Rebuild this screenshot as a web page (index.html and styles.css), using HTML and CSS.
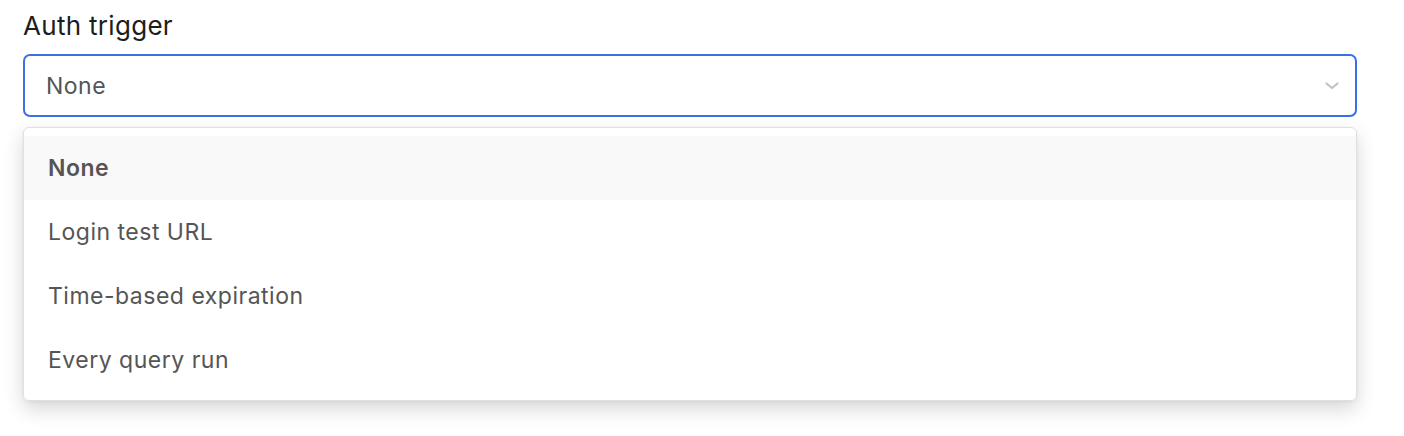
FILE: index.html
```html
<!DOCTYPE html>
<html>
<head>
<meta charset="utf-8">
<link rel="stylesheet" href="styles.css">
</head>
<body>
<div class="field">
  <label class="label">Auth trigger</label>
  <div class="select">
    <span class="value">None</span>
    <svg class="chev" width="14" height="8" viewBox="0 0 14 8"><path d="M1.5 1.5 L7 6 L12.5 1.5" fill="none" stroke="#c2c2c2" stroke-width="2.2" stroke-linecap="round" stroke-linejoin="round"/></svg>
  </div>
  <div class="menu">
    <div class="item active">None</div>
    <div class="item">Login test URL</div>
    <div class="item">Time-based expiration</div>
    <div class="item">Every query run</div>
  </div>
</div>
</body>
</html>
```
FILE: styles.css
```css
html, body { margin: 0; padding: 0; background: #fff; }
body { font-family: Inter, "Noto Sans", sans-serif; min-height: 436px; }
.field { padding: 11px 47px 0 23px; display: flex; flex-direction: column; }
.label { font-size: 26px; color: #1d1d1d; line-height: 30px; margin-bottom: 13px; letter-spacing: 0.3px; }
.select {
  height: 63px; box-sizing: border-box;
  border: 2px solid #3c6fe3; border-radius: 7px;
  display: flex; align-items: center; justify-content: space-between;
  padding: 0 16px 0 21px;
}
.value { font-size: 23px; color: #555; letter-spacing: 0.5px; }
.menu {
  margin-top: 10px;
  border: 1px solid #e0e0e0; border-radius: 6px;
  box-shadow: 0 8px 20px rgba(0,0,0,0.16), 0 1px 3px rgba(0,0,0,0.06);
  padding: 8px 0;
  display: flex; flex-direction: column;
}
.item { height: 64px; display: flex; align-items: center; padding-left: 24px; font-size: 23px; color: #555; letter-spacing: 0.5px; }
.item.active { background: #f9f9f9; font-weight: 600; }
```
